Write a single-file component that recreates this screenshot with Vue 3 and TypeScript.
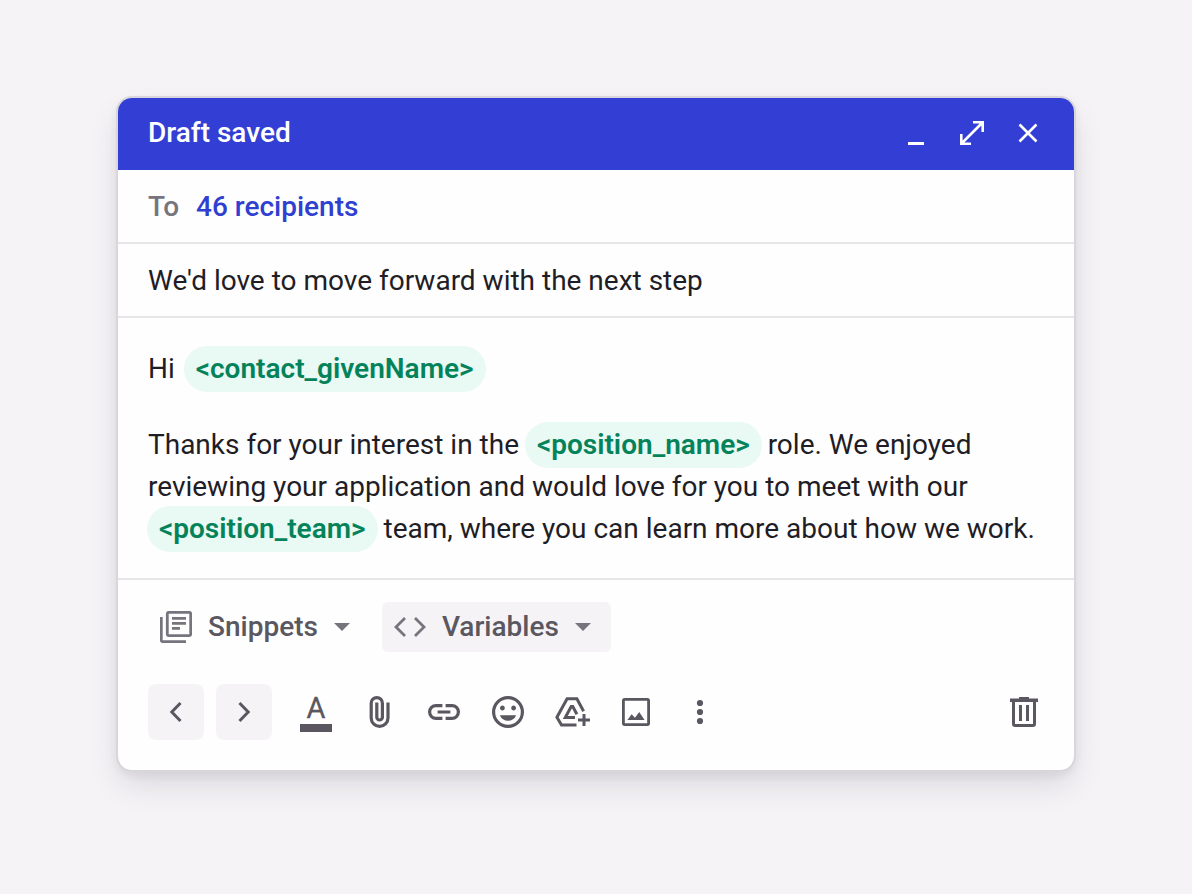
<script setup lang="ts">
import { ref } from 'vue'

interface ToolIcon {
  label: string
  path: string
}

const recipients = ref<number>(46)
const subject = ref<string>("We'd love to move forward with the next step")

const attach: ToolIcon = {
  label: 'Attach file',
  path: 'M720-330q0 104-73 177T470-80q-104 0-177-73t-73-177v-370q0-75 52.5-127.5T400-880q75 0 127.5 52.5T580-700v350q0 46-32 78t-78 32q-46 0-78-32t-32-78v-370h80v370q0 13 8.5 21.5T470-320q13 0 21.5-8.5T500-350v-350q-1-42-29.5-71T400-800q-42 0-71 29t-29 71v370q-1 71 49 120.5T470-160q70 0 119-49.5T640-330v-390h80v390Z',
}
const link: ToolIcon = {
  label: 'Insert link',
  path: 'M440-280H280q-83 0-141.5-58.5T80-480q0-83 58.5-141.5T280-680h160v80H280q-50 0-85 35t-35 85q0 50 35 85t85 35h160v80ZM320-440v-80h320v80H320Zm200 160v-80h160q50 0 85-35t35-85q0-50-35-85t-85-35H520v-80h160q83 0 141.5 58.5T880-480q0 83-58.5 141.5T680-280H520Z',
}
const emoji: ToolIcon = {
  label: 'Insert emoji',
  path: 'M620-520q25 0 42.5-17.5T680-580q0-25-17.5-42.5T620-640q-25 0-42.5 17.5T560-580q0 25 17.5 42.5T620-520Zm-280 0q25 0 42.5-17.5T400-580q0-25-17.5-42.5T340-640q-25 0-42.5 17.5T280-580q0 25 17.5 42.5T340-520Zm140 260q68 0 123.5-38.5T684-400H276q25 63 80.5 101.5T480-260Zm0 180q-83 0-156-31.5T197-197q-54-54-85.5-127T80-480q0-83 31.5-156T197-763q54-54 127-85.5T480-880q83 0 156 31.5T763-763q54 54 85.5 127T880-480q0 83-31.5 156T763-197q-54 54-127 85.5T480-80Zm0-80q134 0 227-93t93-227q0-134-93-227t-227-93q-134 0-227 93t-93 227q0 134 93 227t227 93Z',
}
const image: ToolIcon = {
  label: 'Insert image',
  path: 'M190-130q-26 0-43-17t-17-43v-580q0-26 17-43t43-17h580q26 0 43 17t17 43v580q0 26-17 43t-43 17H190Zm10-70h560v-560H200v560ZM265-280h430L560-480 455-335l-85-90Z',
}
const insertTools: ToolIcon[] = [attach, link, emoji]
</script>

<template>
  <main class="page">
    <section class="composer" aria-label="Message draft">
      <header class="titlebar">
        <h1 class="title">Draft saved</h1>
        <div class="window-actions">
          <button type="button" class="icon-btn" aria-label="Minimize">
            <svg viewBox="0 0 40 40"><path d="M12 29.5h16" class="line" /></svg>
          </button>
          <button type="button" class="icon-btn" aria-label="Expand">
            <svg viewBox="0 0 40 40">
              <path d="M21 8.2h9.7V18M9.300 20v9.700H19M30.500 8.500l-21 21" class="line thin" />
            </svg>
          </button>
          <button type="button" class="icon-btn" aria-label="Close">
            <svg viewBox="0 0 40 40"><path d="M11.500 10.500l17 17M28.500 10.500l-17 17" class="line thin" /></svg>
          </button>
        </div>
      </header>

      <div class="row recipients">
        <span class="muted">To</span>
        <a href="#" class="recipient-link">{{ recipients }} recipients</a>
      </div>

      <div class="row">
        <input v-model="subject" class="subject" type="text" aria-label="Subject" />
      </div>

      <div class="message" contenteditable="true" role="textbox" aria-multiline="true" aria-label="Message body" spellcheck="false">
        <p class="greeting">Hi <span class="variable">&lt;contact_givenName&gt;</span></p>
        <p>
          Thanks for your interest in the <span class="variable">&lt;position_name&gt;</span> role. We enjoyed
          reviewing your application and would love for you to meet with our
          <span class="variable">&lt;position_team&gt;</span> team, where you can learn more about how we work.
        </p>
      </div>

      <footer class="toolbar">
        <div class="menus">
          <button type="button" class="menu-btn">
            <svg class="menu-icon" viewBox="0 0 32 32" aria-hidden="true">
              <rect x="7.3" y="1.3" width="23.4" height="23.4" rx="1.6" />
              <path d="M1.3 6v23a1.7 1.7 0 0 0 1.7 1.7h23M12 7.4h14M12 12.4h14M12 17.4h8" />
            </svg>
            <span>Snippets</span>
            <svg class="caret" viewBox="0 0 16 8" aria-hidden="true"><path d="M0 0h16L8 8z" /></svg>
          </button>
          <button type="button" class="menu-btn active">
            <svg class="menu-icon" viewBox="0 0 32 32" aria-hidden="true">
              <path d="M11 7l-9 9 9 9M21 7l9 9-9 9" />
            </svg>
            <span>Variables</span>
            <svg class="caret" viewBox="0 0 16 8" aria-hidden="true"><path d="M0 0h16L8 8z" /></svg>
          </button>
        </div>

        <div class="tools">
          <div class="history">
            <button type="button" class="nav-btn" aria-label="Previous">
              <svg viewBox="0 0 40 40"><path d="M24.5 11L15.800 20l8.700 9" class="line" /></svg>
            </button>
            <button type="button" class="nav-btn" aria-label="Next">
              <svg viewBox="0 0 40 40"><path d="M15.500 11l8.700 9-8.700 9" class="line" /></svg>
            </button>
          </div>
          <button type="button" class="icon-btn" aria-label="Text color">
            <svg viewBox="0 0 40 40">
              <text x="20" y="26" text-anchor="middle" class="letter">A</text>
              <rect x="4" y="32" width="32" height="8" />
            </svg>
          </button>
          <button v-for="tool in insertTools" :key="tool.label" type="button" class="icon-btn" :aria-label="tool.label">
            <svg viewBox="-20 -980 1000 1000"><path :d="tool.path" /></svg>
          </button>
          <button type="button" class="icon-btn" aria-label="Add from drive">
            <svg viewBox="0 0 40 40">
              <path
                d="M31.6 19.2L24.9 6.8h-9.8L4.9 25.2l4.6 7.8h15M24.9 22.2l-4.1-7.6h-1.6l-5.9 10.9H23M26 28h12M32 22v12"
                class="line"
              />
            </svg>
          </button>
          <button type="button" class="icon-btn" :aria-label="image.label">
            <svg viewBox="-20 -980 1000 1000"><path :d="image.path" /></svg>
          </button>
          <button type="button" class="icon-btn" aria-label="More options">
            <svg viewBox="0 0 40 40">
              <circle cx="20" cy="11" r="3.1" />
              <circle cx="20" cy="20" r="3.1" />
              <circle cx="20" cy="29" r="3.1" />
            </svg>
          </button>
          <button type="button" class="icon-btn discard" aria-label="Discard draft">
            <svg viewBox="0 0 40 40">
              <path d="M15 5h10v1.500h9V10H6V6.500h9z" />
              <path d="M9.500 10v22a1.500 1.500 0 0 0 1.500 1.500h18a1.500 1.500 0 0 0 1.500-1.500V10M16.500 13v16M23.500 13v16" class="line" />
            </svg>
          </button>
        </div>
      </footer>
    </section>
  </main>
</template>

<style>
body {
  background: #f5f3f6;
}
</style>

<style scoped>
.page {
  padding: 96px 116px;
  font-family: Roboto, 'Liberation Sans', sans-serif;
  font-size: 28px;
  line-height: 42px;
  color: #1f1d25;
}
.composer {
  border: 2px solid #d8d6da;
  border-radius: 16px;
  background: #fefefe;
  overflow: hidden;
  box-shadow: 0 4px 8px rgba(30, 25, 40, 0.06), 0 16px 32px -4px rgba(30, 25, 40, 0.12);
}
button {
  padding: 0;
  border: 0;
  background: none;
  color: inherit;
  font: inherit;
  cursor: pointer;
}
svg {
  display: block;
  fill: currentColor;
}
.line {
  fill: none;
  stroke: currentColor;
  stroke-width: 3;
}
.line.thin {
  stroke-width: 2.6;
}
.titlebar {
  display: flex;
  align-items: center;
  justify-content: space-between;
  height: 72px;
  padding: 0 26px 0 30px;
  background: #333fd4;
  color: #fff;
}
.title {
  margin: 0;
  padding-bottom: 2px;
  font-size: 28px;
  font-weight: 500;
}
.window-actions {
  display: flex;
  gap: 16px;
}
.icon-btn {
  width: 40px;
  height: 40px;
}
.icon-btn svg,
.nav-btn svg {
  width: 40px;
  height: 40px;
}
.row {
  display: flex;
  align-items: center;
  height: 70px;
  padding: 2px 30px 0;
  border-bottom: 2px solid #e7e6e9;
}
.recipients {
  gap: 17px;
  font-weight: 500;
}
.muted {
  color: #77747e;
}
.recipient-link {
  color: #2f40d0;
  text-decoration: none;
}
.subject {
  flex: 1;
  min-width: 0;
  padding: 0;
  border: 0;
  outline: 0;
  background: none;
  color: inherit;
  font: inherit;
}
.message {
  padding: 30px 30px 28px;
  border-bottom: 2px solid #e7e6e9;
  outline: 0;
}
.message p {
  margin: 0;
}
.message p + p {
  margin-top: 34px;
}
.variable {
  margin: 0 -1px;
  padding: 6px 12px 7px;
  border-radius: 23px;
  background: #e9f9f3;
  color: #04835b;
  font-weight: 600;
}
.greeting .variable {
  margin-left: 2px;
}
.toolbar {
  display: flex;
  flex-direction: column;
  gap: 32px;
  padding: 22px 30px 30px;
  color: #5a5760;
}
.menus {
  display: flex;
  gap: 12px;
}
.menu-btn {
  display: flex;
  align-items: center;
  gap: 16px;
  height: 50px;
  padding: 0 20px 0 12px;
  border-radius: 6px;
  font-weight: 500;
}
.menu-btn.active,
.nav-btn {
  background: #f5f3f6;
}
.menu-icon {
  width: 32px;
  height: 32px;
  fill: none;
  stroke: #77747e;
  stroke-width: 2.8;
}
.caret {
  width: 16px;
  height: 8px;
  fill: #77747e;
}
.tools {
  display: flex;
  align-items: center;
  gap: 24px;
}
.history {
  display: flex;
  gap: 12px;
}
.nav-btn {
  display: grid;
  place-items: center;
  width: 56px;
  height: 56px;
  border-radius: 8px;
}
.letter {
  font-size: 29px;
  font-weight: 400;
  stroke: currentColor;
  stroke-width: 0.3;
}
.discard {
  margin-left: auto;
}
</style>
